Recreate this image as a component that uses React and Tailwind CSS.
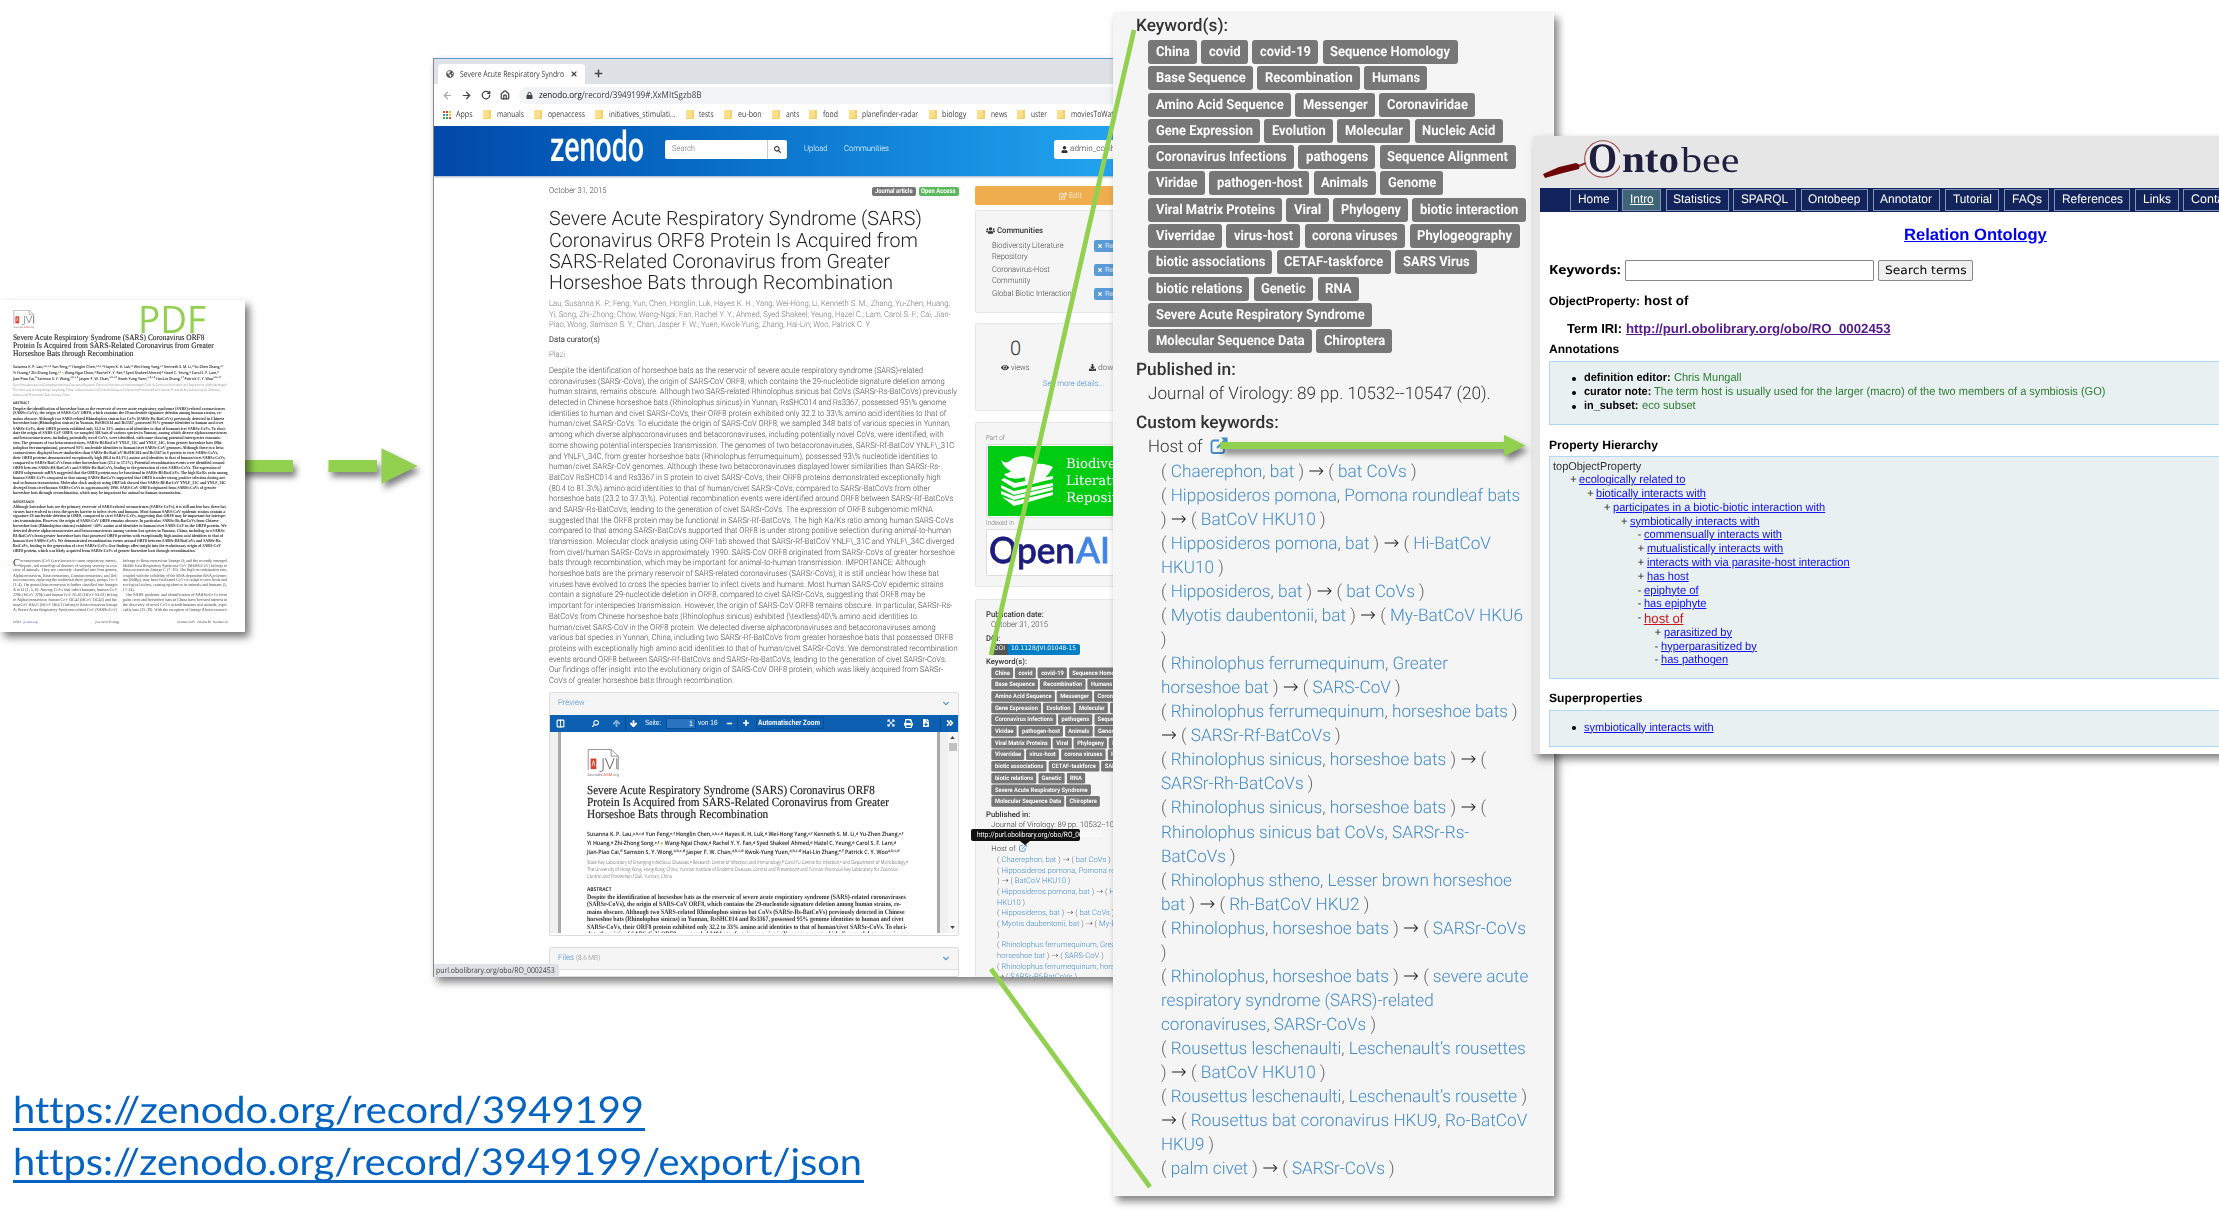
import React, { useLayoutEffect, useRef } from "react";
import {
  FaSearch, FaUser, FaUsers, FaEye, FaDownload, FaRegEdit, FaTimes, FaLock, FaGlobeAmericas,
  FaChevronDown, FaExpandArrowsAlt, FaPrint, FaFileDownload,
} from "react-icons/fa";
import { ArrowLeft, ArrowRight, RotateCw, Home, Plus, X, ChevronsRight, Columns2, ArrowUp, ArrowDown, Minus } from "lucide-react";

/* A single line of text condensed or widened to a given measure. */
function Fit({ w, className = "", children }) {
  const ref = useRef(null);
  useLayoutEffect(() => {
    const el = ref.current;
    const natural = parseFloat(getComputedStyle(el).width);
    if (natural > 0) el.style.transform = `scaleX(${w / natural})`;
  }, [w]);
  return (
    <span className={"block shrink-0 whitespace-pre " + className} style={{ width: w }}>
      <span ref={ref} className="inline-block origin-left align-top">{children}</span>
    </span>
  );
}

const Lines = ({ rows, className = "" }) => (
  <div className={className}>
    {rows.map(([t, w], i) => <Fit key={i} w={w}>{t}</Fit>)}
  </div>
);

/* ------------------------------------------------ journal article ---- */

const articleAbstract = [
  ["Despite the identification of horseshoe bats as the reservoir of severe acute respiratory syndrome (SARS)-related coronaviruses", 318.7],
  ["(SARSr-CoVs), the origin of SARS-CoV ORF8, which contains the 29-nucleotide signature deletion among human strains, re-", 314],
  ["mains obscure. Although two SARS-related Rhinolophus sinicus bat CoVs (SARSr-Rs-BatCoVs) previously detected in Chinese", 317.5],
  ["horseshoe bats (Rhinolophus sinicus) in Yunnan, RsSHC014 and Rs3367, possessed 95% genome identities to human and civet", 316.4],
  ["SARSr-CoVs, their ORF8 protein exhibited only 32.2 to 33% amino acid identities to that of human/civet SARSr-CoVs. To eluci-", 320],
  ["date the origin of SARS-CoV ORF8, we sampled 348 bats of various species in Yunnan, among which diverse alphacoronaviruses", 321.7],
  ["and betacoronaviruses, including potentially novel CoVs, were identified, with some showing potential interspecies transmis-", 313],
  ["sion. The genomes of two betacoronaviruses, SARSr-Rf-BatCoV YNLF_31C and YNLF_34C, from greater horseshoe bats (Rhi-", 315],
  ["nolophus ferrumequinum), possessed 93% nucleotide identities to human/civet SARSr-CoV genomes. Although these two beta-", 317.5],
  ["coronaviruses displayed lower similarities than SARSr-Rs-BatCoV RsSHC014 and Rs3367 in S protein to civet SARSr-CoVs,", 308.5],
  ["their ORF8 proteins demonstrated exceptionally high (80.4 to 81.3%) amino acid identities to that of human/civet SARSr-CoVs,", 319.5],
  ["compared to SARSr-BatCoVs from other horseshoe bats (23.2 to 37.3%). Potential recombination events were identified around", 318],
  ["ORF8 between SARSr-Rf-BatCoVs and SARSr-Rs-BatCoVs, leading to the generation of civet SARSr-CoVs. The expression of", 312.5],
  ["ORF8 subgenomic mRNA suggested that the ORF8 protein may be functional in SARSr-Rf-BatCoVs. The high Ka/Ks ratio among", 323],
  ["human SARS-CoVs compared to that among SARSr-BatCoVs supported that ORF8 is under strong positive selection during ani-", 320],
  ["mal-to-human transmission. Molecular clock analysis using ORF1ab showed that SARSr-Rf-BatCoV YNLF_31C and YNLF_34C", 320.5],
  ["diverged from civet/human SARSr-CoVs in approximately 1990. SARS-CoV ORF8 originated from SARSr-CoVs of greater", 305.5],
  ["horseshoe bats through recombination, which may be important for animal-to-human transmission.", 252.5],
];
const importance = [
  ["Although horseshoe bats are the primary reservoir of SARS-related coronaviruses (SARSr-CoVs), it is still unclear how these bat", 320],
  ["viruses have evolved to cross the species barrier to infect civets and humans. Most human SARS-CoV epidemic strains contain a", 319],
  ["signature 29-nucleotide deletion in ORF8, compared to civet SARSr-CoVs, suggesting that ORF8 may be important for interspe-", 320.5],
  ["cies transmission. However, the origin of SARS-CoV ORF8 remains obscure. In particular, SARSr-Rs-BatCoVs from Chinese", 309],
  ["horseshoe bats (Rhinolophus sinicus) exhibited <40% amino acid identities to human/civet SARS-CoV in the ORF8 protein. We", 321],
  ["detected diverse alphacoronaviruses and betacoronaviruses among various bat species in Yunnan, China, including two SARSr-", 319.5],
  ["Rf-BatCoVs from greater horseshoe bats that possessed ORF8 proteins with exceptionally high amino acid identities to that of", 316],
  ["human/civet SARSr-CoVs. We demonstrated recombination events around ORF8 between SARSr-Rf-BatCoVs and SARSr-Rs-", 313.5],
  ["BatCoVs, leading to the generation of civet SARSr-CoVs. Our findings offer insight into the evolutionary origin of SARS-CoV", 313],
  ["ORF8 protein, which was likely acquired from SARSr-CoVs of greater horseshoe bats through recombination.", 274.5],
];
const columnA = [
  ["oronaviruses (CoVs) are known to cause respiratory, enteric,", 146],
  ["hepatic, and neurological diseases of varying severity in a va-", 146],
  ["riety of animals. They are currently classified into four genera,", 157],
  ["Alphacoronavirus, Betacoronavirus, Gammacoronavirus, and Del-", 157],
  ["tacoronavirus, replacing the traditional three groups, groups 1 to 3", 157],
  ["(1–4). The genus Betacoronavirus is further classified into lineages", 157],
  ["A to D (1, 5, 6). Among CoVs that infect humans, human CoV", 157],
  ["229E (HCoV 229E) and human CoV NL63 (HCoV NL63) belong", 157],
  ["to Alphacoronavirus; human CoV OC43 (HCoV OC43) and hu-", 157],
  ["man CoV HKU1 (HCoV HKU1) belong to Betacoronavirus lineage", 157],
  ["A; Severe Acute Respiratory Syndrome-related CoV (SARSr-CoV)", 157],
];
const columnB = [
  ["belongs to Betacoronavirus lineage B; and the recently emerged", 157],
  ["Middle East Respiratory Syndrome CoV (MERS-CoV) belongs to", 157],
  ["Betacoronavirus lineage C (7–16). The high recombination rate,", 157],
  ["coupled with the infidelity of the RNA-dependent RNA polymer-", 157],
  ["ase (RdRp), may have facilitated CoVs to adapt to new hosts and", 157],
  ["ecological niches, causing epidemics in animals and humans (5,", 157],
  ["17–24).", 18],
  ["   The SARS epidemic and identification of SARSr-CoVs from", 157],
  ["palm civet and horseshoe bats in China have boosted interest in", 157],
  ["the discovery of novel CoVs in both humans and animals, espe-", 157],
  ["cially bats (25–29). With the exception of lineage A betacoronavi-", 157],
];

const Sup = ({ children }) => <span className="relative -top-[1.8px] text-[4px]">{children}</span>;

function Article() {
  return (
    <div className="w-[325px] font-['Liberation_Serif',serif] text-[#333]">
      <div className="w-[33px] h-[27px]">
        <svg viewBox="0 0 33 22" className="block w-[33px] h-[21px]" fill="none" stroke="#777" strokeWidth="0.8">
          <path d="M.5 22V.5h24l7.500 7V22M24.500.5v7H32" />
          <rect x="3" y="10" width="6" height="11" fill="#d4402b" stroke="none" />
          <path d="M6 12l-1.500 6M6 12l1.500 6" stroke="#fff" />
        </svg>
        <div className="-mt-[13px] ml-[14.500px] h-[14px]">
          <Fit w={18} className="font-['Open_Sans',sans-serif] font-light text-[15px] leading-[15px] text-[#555]">JVI</Fit>
        </div>
        <Fit w={32} className="mt-px font-['Liberation_Sans',sans-serif] text-[4px] leading-[5px] text-[#777]">Journals.<span className="text-[#d4402b]">ASM</span>.org</Fit>
      </div>
      <Lines className="mt-2 text-[12.4px] leading-[12.1px] text-[#222] [-webkit-text-stroke:0.15px_#222]" rows={[
        ["Severe Acute Respiratory Syndrome (SARS) Coronavirus ORF8", 287.8],
        ["Protein Is Acquired from SARS-Related Coronavirus from Greater", 302],
        ["Horseshoe Bats through Recombination", 181.3],
      ]} />
      <Lines className="mt-[11px] font-['Open_Sans',sans-serif] font-semibold text-[5.8px] leading-[6.9px] text-[#222]" rows={[
        [<>Susanna K. P. Lau,<Sup>a,b,c,d</Sup> Yun Feng,<Sup>e,f</Sup> Honglin Chen,<Sup>a,b,c,d</Sup> Hayes K. H. Luk,<Sup>d</Sup> Wei-Hong Yang,<Sup>e,f</Sup> Kenneth S. M. Li,<Sup>d</Sup> Yu-Zhen Zhang,<Sup>e,f</Sup></>, 316.4],
        [<>Yi Huang,<Sup>d</Sup> Zhi-Zhong Song,<Sup>e,f</Sup> <span className="leading-none text-[#a6ce39]">●</span> Wang-Ngai Chow,<Sup>d</Sup> Rachel Y. Y. Fan,<Sup>d</Sup> Syed Shakeel Ahmed,<Sup>d</Sup> Hazel C. Yeung,<Sup>d</Sup> Carol S. F. Lam,<Sup>d</Sup></>, 309.3],
        [<>Jian-Piao Cai,<Sup>d</Sup> Samson S. Y. Wong,<Sup>a,b,c,d</Sup> Jasper F. W. Chan,<Sup>a,b,c,d</Sup> Kwok-Yung Yuen,<Sup>a,b,c,d</Sup> Hai-Lin Zhang,<Sup>e,f</Sup> Patrick C. Y. Woo<Sup>a,b,c,d</Sup></>, 312.6],
      ]} />
      <Lines className="mt-[1.2px] font-['Open_Sans',sans-serif] font-light text-[5.2px] leading-[6.8px] text-[#444]" rows={[
        ["State Key Laboratory of Emerging Infectious Diseases,ᵃ Research Centre of Infection and Immunology,ᵇ Carol Yu Centre for Infection,ᶜ and Department of Microbiology,ᵈ", 320.9],
        ["The University of Hong Kong, Hong Kong, China; Yunnan Institute of Endemic Diseases Control and Preventionᵉ and Yunnan Provincial Key Laboratory for Zoonosis", 311],
        ["Control and Prevention,ᶠ Dali, Yunnan, China", 85],
      ]} />
      <Fit w={24.5} className="mt-[6.5px] font-['Open_Sans',sans-serif] font-bold text-[5.4px] leading-[7px]">ABSTRACT</Fit>
      <Lines className="mt-[0.8px] font-bold text-[6.8px] leading-[7.42px]" rows={articleAbstract} />
      <Fit w={31.5} className="mt-[6.6px] font-['Open_Sans',sans-serif] font-bold text-[5.4px] leading-[7px]">IMPORTANCE</Fit>
      <Lines className="font-bold text-[6.8px] leading-[7.45px]" rows={importance} />
      <div className="mt-[7px] flex gap-[8px] text-[6.6px] leading-[7.35px] text-[#444]">
        <div className="relative w-[157px]">
          <span className="absolute left-0 top-0 text-[16px] leading-[14px]">C</span>
          <Lines className="pl-[11px]" rows={columnA.slice(0, 2)} />
          <Lines rows={columnA.slice(2)} />
        </div>
        <Lines rows={columnB} />
      </div>
      <div className="mt-[12px] flex w-[323px] justify-between font-['Open_Sans',sans-serif] text-[4.6px] leading-[7px]">
        <Fit w={37}>10532   <span className="text-[#33c]">jvi.asm.org</span></Fit>
        <Fit w={36}>Journal of Virology</Fit>
        <Fit w={76}>October 2015   Volume 89   Number 20</Fit>
      </div>
    </div>
  );
}

/* ------------------------------------------- keyword metadata block ---- */

const tagRows = [
  [["China", 48.7], ["covid", 46.7], ["covid-19", 66], ["Sequence Homology", 135]],
  [["Base Sequence", 104.7], ["Recombination", 102.7], ["Humans", 63]],
  [["Amino Acid Sequence", 142.7], ["Messenger", 79.7], ["Coronaviridae", 96]],
  [["Gene Expression", 112], ["Evolution", 68.7], ["Molecular", 73], ["Nucleic Acid", 88.3]],
  [["Coronavirus Infections", 145.7], ["pathogens", 77.3], ["Sequence Alignment", 136]],
  [["Viridae", 56.7], ["pathogen-host", 100.3], ["Animals", 62], ["Genome", 63.3]],
  [["Viral Matrix Proteins", 134], ["Viral", 42.3], ["Phylogeny", 75], ["biotic interaction", 113.3]],
  [["Viverridae", 74], ["virus-host", 74], ["corona viruses", 100.7], ["Phylogeography", 110]],
  [["biotic associations", 124.3], ["CETAF-taskforce", 114.3], ["SARS Virus", 81.7]],
  [["biotic relations", 101.3], ["Genetic", 59.7], ["RNA", 41.7]],
  [["Severe Acute Respiratory Syndrome", 223.7]],
  [["Molecular Sequence Data", 163.7], ["Chiroptera", 76.3]],
];

const hostLines = [
  ["( Chaerephon, bat ) → ( bat CoVs )", 255.7],
  ["( Hipposideros pomona, Pomona roundleaf bats", 359.3],
  [") → ( BatCoV HKU10 )", 164.7],
  ["( Hipposideros pomona, bat ) → ( Hi-BatCoV", 330],
  ["HKU10 )", 62.7],
  ["( Hipposideros, bat ) → ( bat CoVs )", 263.7],
  ["( Myotis daubentonii, bat ) → ( My-BatCoV HKU6", 362],
  [")", 5.5],
  ["( Rhinolophus ferrumequinum, Greater", 287],
  ["horseshoe bat ) → ( SARS-CoV )", 239.7],
  ["( Rhinolophus ferrumequinum, horseshoe bats )", 356.7],
  ["→ ( SARSr-Rf-BatCoVs )", 179.7],
  ["( Rhinolophus sinicus, horseshoe bats ) → (", 325],
  ["SARSr-Rh-BatCoVs )", 152.3],
  ["( Rhinolophus sinicus, horseshoe bats ) → (", 325],
  ["Rhinolophus sinicus bat CoVs, SARSr-Rs-", 308.3],
  ["BatCoVs )", 74.7],
  ["( Rhinolophus stheno, Lesser brown horseshoe", 351],
  ["bat ) → ( Rh-BatCoV HKU2 )", 208.3],
  ["( Rhinolophus, horseshoe bats ) → ( SARSr-CoVs", 365],
  [")", 5.5],
  ["( Rhinolophus, horseshoe bats ) → ( severe acute", 367.3],
  ["respiratory syndrome (SARS)-related", 272.7],
  ["coronaviruses, SARSr-CoVs )", 215],
  ["( Rousettus leschenaulti, Leschenault’s rousettes", 364.7],
  [") → ( BatCoV HKU10 )", 164.7],
  ["( Rousettus leschenaulti, Leschenault’s rousette )", 366],
  ["→ ( Rousettus bat coronavirus HKU9, Ro-BatCoV", 366.3],
  ["HKU9 )", 53],
  ["( palm civet ) → ( SARSr-CoVs )", 233.7],
];

const Tokens = ({ text }) =>
  text.split(/(\(\s|\s\)|^\)|\($|→|,)/).map((p, i) =>
    p === "→" ? <span key={i} className="font-['DejaVu_Sans',sans-serif] text-[19px] leading-none text-[#222]">→</span>
      : i % 2 ? <span key={i} className="text-[#666]">{p}</span>
        : <span key={i}>{p}</span>);

function KeywordBlock() {
  return (
    <div className="w-[404px] font-['Roboto',sans-serif] text-[17.3px] leading-6 text-[#333]">
      <Fit w={92} className="font-medium text-[#333]">Keyword(s):</Fit>
      <div className="ml-3 mt-[2px] flex flex-col gap-[2.3px]">
        {tagRows.map((row, i) => (
          <div key={i} className="flex gap-[4.4px]">
            {row.map(([t, w]) => (
              <div key={t} className="h-6 shrink-0 rounded-[3px] bg-[#777] pl-[7.5px]" style={{ width: w }}>
                <Fit w={w - 15} className="text-[13.8px] font-bold leading-6 text-white">{t}</Fit>
              </div>
            ))}
          </div>
        ))}
      </div>
      <Fit w={99.7} className="mt-[5px] font-medium text-[#333]">Published in:</Fit>
      <Fit w={342.7} className="ml-3 font-light">Journal of Virology: 89 pp. 10532--10547 (20).</Fit>
      <Fit w={142.7} className="mt-[5px] font-medium text-[#333]">Custom keywords:</Fit>
      <div className="ml-3 flex">
        <Fit w={54.7} className="font-light">Host of</Fit>
        <svg viewBox="0 0 18 18" className="ml-[7px] mt-[2px] h-[18px] w-[18px]" fill="none" stroke="#428bca" strokeWidth="1.8">
          <path d="M9 3.500H3.500a2 2 0 0 0-2 2V14a2 2 0 0 0 2 2H12a2 2 0 0 0 2-2V9M7 11l8-8" />
          <path d="M11 .5h6.500V7z" fill="#428bca" stroke="none" />
        </svg>
      </div>
      <div className="ml-[24.7px] mt-[1px] font-light text-[#428bca]">
        {hostLines.map(([t, w], i) => <Fit key={i} w={w} className="h-[24.02px]"><Tokens text={t} /></Fit>)}
      </div>
    </div>
  );
}

/* -------------------------------------------------- browser window ---- */

const bookmarks = [["manuals", 27], ["openaccess", 37], ["initiatives_stimulati...", 66.5], ["tests", 14.5], ["eu-bon", 23.7], ["ants", 13.3], ["food", 15], ["planefinder-radar", 56], ["biology", 24.3], ["news", 16.3], ["uster", 16], ["moviesToWatch", 50]];
const appColors = ["bg-[#ea4335]", "bg-[#ea4335]", "bg-[#fbbc05]", "bg-[#34a853]", "bg-[#4285f4]", "bg-[#fbbc05]", "bg-[#34a853]", "bg-[#34a853]", "bg-[#ea4335]"];

const recordAbstract = [
  ["Despite the identification of horseshoe bats as the reservoir of severe acute respiratory syndrome (SARS)-related", 374],
  ["coronaviruses (SARSr-CoVs), the origin of SARS-CoV ORF8, which contains the 29-nucleotide signature deletion among", 395.8],
  ["human strains, remains obscure. Although two SARS-related Rhinolophus sinicus bat CoVs (SARSr-Rs-BatCoVs) previously", 407.8],
  ["detected in Chinese horseshoe bats (Rhinolophus sinicus) in Yunnan, RsSHC014 and Rs3367, possessed 95\\% genome", 397.3],
  ["identities to human and civet SARSr-CoVs, their ORF8 protein exhibited only 32.2 to 33\\% amino acid identities to that of", 397.3],
  ["human/civet SARSr-CoVs. To elucidate the origin of SARS-CoV ORF8, we sampled 348 bats of various species in Yunnan,", 401.4],
  ["among which diverse alphacoronaviruses and betacoronaviruses, including potentially novel CoVs, were identified, with", 394.7],
  ["some showing potential interspecies transmission. The genomes of two betacoronaviruses, SARSr-Rf-BatCoV YNLF\\_31C", 405.2],
  ["and YNLF\\_34C, from greater horseshoe bats (Rhinolophus ferrumequinum), possessed 93\\% nucleotide identities to", 388.6],
  ["human/civet SARSr-CoV genomes. Although these two betacoronaviruses displayed lower similarities than SARSr-Rs-", 391.3],
  ["BatCoV RsSHC014 and Rs3367 in S protein to civet SARSr-CoVs, their ORF8 proteins demonstrated exceptionally high", 391.6],
  ["(80.4 to 81.3\\%) amino acid identities to that of human/civet SARSr-CoVs, compared to SARSr-BatCoVs from other", 381.1],
  ["horseshoe bats (23.2 to 37.3\\%). Potential recombination events were identified around ORF8 between SARSr-Rf-BatCoVs", 404.4],
  ["and SARSr-Rs-BatCoVs, leading to the generation of civet SARSr-CoVs. The expression of ORF8 subgenomic mRNA", 383.7],
  ["suggested that the ORF8 protein may be functional in SARSr-Rf-BatCoVs. The high Ka/Ks ratio among human SARS-CoVs", 404.4],
  ["compared to that among SARSr-BatCoVs supported that ORF8 is under strong positive selection during animal-to-human", 402.2],
  ["transmission. Molecular clock analysis using ORF1ab showed that SARSr-Rf-BatCoV YNLF\\_31C and YNLF\\_34C diverged", 405.6],
  ["from civet/human SARSr-CoVs in approximately 1990. SARS-CoV ORF8 originated from SARSr-CoVs of greater horseshoe", 405.6],
  ["bats through recombination, which may be important for animal-to-human transmission. IMPORTANCE: Although", 376.6],
  ["horseshoe bats are the primary reservoir of SARS-related coronaviruses (SARSr-CoVs), it is still unclear how these bat", 390.1],
  ["viruses have evolved to cross the species barrier to infect civets and humans. Most human SARS-CoV epidemic strains", 394.7],
  ["contain a signature 29-nucleotide deletion in ORF8, compared to civet SARSr-CoVs, suggesting that ORF8 may be", 376.2],
  ["important for interspecies transmission. However, the origin of SARS-CoV ORF8 remains obscure. In particular, SARSr-Rs-", 403.3],
  ["BatCoVs from Chinese horseshoe bats (Rhinolophus sinicus) exhibited {\\textless}40\\% amino acid identities to", 368],
  ["human/civet SARS-CoV in the ORF8 protein. We detected diverse alphacoronaviruses and betacoronaviruses among", 386.8],
  ["various bat species in Yunnan, China, including two SARSr-Rf-BatCoVs from greater horseshoe bats that possessed ORF8", 404],
  ["proteins with exceptionally high amino acid identities to that of human/civet SARSr-CoVs. We demonstrated recombination", 408.6],
  ["events around ORF8 between SARSr-Rf-BatCoVs and SARSr-Rs-BatCoVs, leading to the generation of civet SARSr-CoVs.", 397.7],
  ["Our findings offer insight into the evolutionary origin of SARS-CoV ORF8 protein, which was likely acquired from SARSr-", 394.3],
  ["CoVs of greater horseshoe bats through recombination.", 184.7],
];

function BrowserChrome() {
  return (
    <div className="font-['Open_Sans',sans-serif] text-[8.6px] text-[#444]">
      <div className="flex h-[26px] items-end bg-[#dee1e6] pl-[4px] shadow-[inset_0_1px_0_#5b9bd5]">
        <div className="flex h-5 w-[147px] items-center rounded-t-[4px] bg-white pl-2">
          <FaGlobeAmericas className="h-[8px] w-[8px] text-[#555]" />
          <Fit w={104} className="ml-[6px]">Severe Acute Respiratory Syndro</Fit>
          <X className="ml-[6px] h-[8px] w-[8px]" strokeWidth={3.5} />
        </div>
        <Plus className="mb-[5px] ml-2 h-[11px] w-[11px]" strokeWidth={3.2} />
      </div>
      <div className="flex h-[22px] items-center bg-white pl-[8px]">
        <ArrowLeft className="h-[11px] w-[11px] text-[#aaa]" strokeWidth={2.6} />
        <ArrowRight className="ml-[8px] h-[11px] w-[11px]" strokeWidth={2.6} />
        <RotateCw className="ml-[9px] h-[10px] w-[10px]" strokeWidth={3} />
        <Home className="ml-[9px] h-[10px] w-[10px]" strokeWidth={3} />
        <div className="ml-[9px] flex h-[17px] grow items-center rounded-l-full bg-[#f1f3f4] pl-[7px]">
          <FaLock className="h-[7px] w-[7px]" />
          <Fit w={162.6} className="ml-[6px] text-[9.3px]"><span className="text-[#111]">zenodo.org</span>/record/3949199#.XxMItSgzb8B</Fit>
        </div>
      </div>
      <div className="flex h-5 items-center bg-white pb-[3px] pl-[9px]">
        <div className="grid h-[8px] w-[8px] shrink-0 grid-cols-3 gap-[1px]">
          {appColors.map((c, i) => <span key={i} className={c} />)}
        </div>
        <Fit w={16.6} className="ml-[5px]">Apps</Fit>
        {bookmarks.map(([t, w]) => (
          <React.Fragment key={t}>
            <span className="ml-[10.4px] h-[9px] w-[8px] shrink-0 rounded-[1px] bg-[#fbdf8a] shadow-[inset_-2px_-1px_0_#f7d06a]" />
            <Fit w={w} className="ml-[5.7px]">{t}</Fit>
          </React.Fragment>
        ))}
      </div>
    </div>
  );
}

function SiteHeader() {
  return (
    <div className="flex h-[49.5px] shrink-0 items-center bg-gradient-to-r from-[#0348a9] to-[#22a4f0] pb-[3px] pl-[115.5px] text-[8.2px] font-light text-white shadow-[0_1px_2px_#9ab]">
      <Fit w={94} className="-mt-[3px] h-[42px] text-[42px] font-medium leading-[42px]">zenodo</Fit>
      <div className="ml-[21px] flex h-[19px] w-[102.5px] shrink-0 items-center rounded-l-[2px] bg-white pl-[7px] text-[#777]"><Fit w={23}>Search</Fit></div>
      <div className="flex h-[19px] w-5 shrink-0 items-center justify-center rounded-r-[2px] border-l border-[#ccc] bg-white"><FaSearch className="h-[7px] w-[7px] text-[#333]" /></div>
      <Fit w={23.4} className="ml-[17px]">Upload</Fit>
      <Fit w={45} className="ml-[16.3px]">Communities</Fit>
      <div className="ml-[165px] flex h-[19px] w-[70px] shrink-0 items-center rounded-[2px] bg-white pl-[7px] text-[#333]">
        <FaUser className="h-[7px] w-[7px] shrink-0" />
        <Fit w={50} className="ml-[2px]">admin_coviho</Fit>
      </div>
    </div>
  );
}

function PdfPreview() {
  return (
    <div className="mt-[5px] h-[244px] rounded-[2px] border border-[#ddd] bg-white">
      <div className="flex h-[22px] items-center justify-between bg-[#f5f5f5] px-[8px] pb-px text-[#428bca]">
        <Fit w={26.6}>Preview</Fit><FaChevronDown className="h-[7px] w-[8px]" />
      </div>
      <div className="flex h-[17.5px] items-center bg-[#0d5fb1] pl-[6px] font-['Liberation_Sans',sans-serif] font-normal text-[7.5px] text-white">
        <Columns2 className="h-[9px] w-[9px]" strokeWidth={3} />
        <FaSearch className="ml-[27px] h-[7px] w-[7px] -scale-x-100" />
        <ArrowUp className="ml-[13px] h-[9px] w-[9px] opacity-50" strokeWidth={5} />
        <span className="ml-[4px] h-[13px] w-px bg-[#0a4a8c]" />
        <ArrowDown className="ml-[3px] h-[9px] w-[9px]" strokeWidth={5} />
        <Fit w={16} className="ml-[7px]">Seite:</Fit>
        <div className="ml-[5px] h-[11px] w-[30px] border border-[#0a4f96] bg-[#2a73c0] pr-[2px] text-right leading-[10px]">1</div>
        <Fit w={19.5} className="ml-[2px]">von 16</Fit>
        <Minus className="ml-[8px] h-[7px] w-[7px]" strokeWidth={5} />
        <span className="ml-[4px] h-[13px] w-px bg-[#0a4a8c]" />
        <Plus className="ml-[4px] h-[8px] w-[8px]" strokeWidth={5} />
        <div className="ml-[6px] flex h-[12px] w-[68px] items-center border border-[#0a4f96] pl-px"><Fit w={62} className="font-semibold">Automatischer Zoom</Fit></div>
        <FaExpandArrowsAlt className="ml-[63px] h-[8px] w-[8px]" />
        <FaPrint className="ml-[9px] h-[9px] w-[9px]" />
        <FaFileDownload className="ml-[9px] h-[8px] w-[8px]" />
        <span className="ml-[10px] h-[13px] w-px bg-[#0a4a8c]" />
        <ChevronsRight className="ml-[4px] h-[10px] w-[10px]" strokeWidth={4} />
      </div>
      <div className="flex h-[201px] bg-[#f0f0f0]">
        <div className="ml-[8px] h-full w-[3px] bg-[#aaa]" />
        <div className="h-full w-[376px] overflow-hidden bg-white pl-[25.5px] pt-[17px]"><Article /></div>
        <div className="h-full w-[3px] bg-[#aaa]" />
        <div className="ml-auto flex w-[10px] flex-col items-center bg-[#f7f7f7] py-[4px]">
          <svg viewBox="0 0 6 4" className="h-[3px] w-[5px]"><path d="M0 4L3 0l3 4z" fill="#444" /></svg>
          <div className="mt-[4px] h-[8px] w-[8px] bg-[#c1c1c1]" />
          <svg viewBox="0 0 6 4" className="mt-auto h-[3px] w-[5px]"><path d="M0 0l3 4 3-4z" fill="#444" /></svg>
        </div>
      </div>
    </div>
  );
}

function RecordMain() {
  return (
    <div className="w-[409.5px] shrink-0 text-[8.2px] font-light leading-[10.68px] text-[#444]">
      <div className="mt-[10px] flex h-[12px] items-center">
        <Fit w={57.5}>October 31, 2015</Fit>
        <div className="ml-auto flex h-[9.5px] w-[44px] justify-center rounded-[2px] bg-[#777] text-white"><Fit w={37.5} className="text-[6.6px] font-bold leading-[9.5px]">Journal article</Fit></div>
        <div className="ml-[2.5px] flex h-[9.5px] w-[40px] justify-center rounded-[2px] bg-[#5cb85c] text-white"><Fit w={34.5} className="text-[6.6px] font-bold leading-[9.5px]">Open Access</Fit></div>
      </div>
      <Lines className="mt-[10.7px] text-[19.8px] leading-[21.4px] text-[#222]" rows={[
        ["Severe Acute Respiratory Syndrome (SARS)", 372.8],
        ["Coronavirus ORF8 Protein Is Acquired from", 368.8],
        ["SARS-Related Coronavirus from Greater", 341],
        ["Horseshoe Bats through Recombination", 344],
      ]} />
      <Lines className="mt-[5px] text-[#777]" rows={[
        ["Lau, Susanna K. P.; Feng, Yun; Chen, Honglin; Luk, Hayes K. H.; Yang, Wei-Hong; Li, Kenneth S. M.; Zhang, Yu-Zhen; Huang,", 401],
        ["Yi; Song, Zhi-Zhong; Chow, Wang-Ngai; Fan, Rachel Y. Y.; Ahmed, Syed Shakeel; Yeung, Hazel C.; Lam, Carol S. F.; Cai, Jian-", 401.8],
        ["Piao; Wong, Samson S. Y.; Chan, Jasper F. W.; Yuen, Kwok-Yung; Zhang, Hai-Lin; Woo, Patrick C. Y.", 322.2],
      ]} />
      <Fit w={51} className="mt-[4.2px] font-normal text-[#333]">Data curator(s)</Fit>
      <Fit w={16} className="mt-[4.3px] text-[#777]">Plazi</Fit>
      <Lines className="mt-[5.3px]" rows={recordAbstract} />
      <PdfPreview />
      <div className="mt-[11px] h-[30px] rounded-[2px] border border-[#ddd]">
        <div className="flex h-[22.5px] items-center border-b border-[#ddd] bg-[#f5f5f5] px-[8px] text-[#428bca]">
          <Fit w={16}>Files</Fit><Fit w={24} className="ml-[2px] text-[7px] text-[#888]">(8.6 MB)</Fit>
          <FaChevronDown className="ml-auto h-[7px] w-[8px]" />
        </div>
      </div>
    </div>
  );
}

const RemoveButton = () => (
  <div className="ml-auto flex h-[12px] w-[40px] items-center gap-[2px] rounded-[2px] bg-[#5b9bd8] pl-[3px] text-[7px] text-white"><FaTimes className="h-[6px] w-[6px]" />Remove</div>
);

function RecordSidebar() {
  const panel = "rounded-[2px] border border-[#e6e6e6] bg-[#f5f5f5]";
  return (
    <div className="ml-[16.5px] w-[163px] shrink-0 text-[8.1px] font-light leading-[10.7px] text-[#444]">
      <div className="mt-[10.7px] flex h-[18.7px] items-center justify-center gap-[2px] rounded-[2px] bg-[#f0ad4e] pl-[27px] text-white">
        <FaRegEdit className="h-[8px] w-[8px]" /><Fit w={12.8}>Edit</Fit>
      </div>
      <div className={panel + " mt-[5.3px] h-[102.7px] pl-[10px] pt-[14px]"}>
        <div className="flex items-center text-[#333]"><FaUsers className="h-[9px] w-[9px]" /><Fit w={46} className="ml-[2px] font-medium">Communities</Fit></div>
        <div className="mt-[4.2px] flex w-[148px] flex-col gap-[2.5px] pl-[6px]">
          <div className="flex items-start"><Lines rows={[["Biodiversity Literature", 71.7], ["Repository", 35.7]]} /><RemoveButton /></div>
          <div className="flex items-start"><Lines rows={[["Coronavirus-Host", 58], ["Community", 38.3]]} /><RemoveButton /></div>
          <div className="flex items-start"><Fit w={83.6}>Global Biotic Interactions</Fit><RemoveButton /></div>
        </div>
      </div>
      <div className={panel + " mt-[10.6px] h-[87.4px] pt-[13px]"}>
        <div className="flex">
          <div className="flex w-[92px] flex-col items-center">
            <div className="text-[20px] leading-[22px] text-[#333]">0</div>
            <div className="mt-[2.5px] flex items-center gap-[2px]"><FaEye className="h-[7px] w-[8px] text-[#333]" /><Fit w={18.5}>views</Fit></div>
          </div>
          <div className="ml-[34px] mt-[24.5px] flex items-center gap-[2px]"><FaDownload className="h-[7px] w-[7px] text-[#333]" /><span>downloads</span></div>
        </div>
        <Fit w={61} className="ml-[66.5px] mt-[5.5px] text-[#428bca]">See more details...</Fit>
      </div>
      <div className={panel + " mt-[11px] h-[165.3px] pl-[10px] pt-[10px]"}>
        <Fit w={18.8} className="text-[7px] text-[#777]">Part of</Fit>
        <div className="h-[74px] rounded-[2px] border border-[#ddd] bg-white p-px">
          <div className="flex h-[70px] items-center bg-[#00cc11]">
            <svg viewBox="0 0 54 50" className="ml-[12px] h-[50px] w-[54px] shrink-0" fill="#fff">
              <path d="M1 4c3 3 6 3 9 1C14 0 24-1 32 2l4 6c7-1 12 1 17 3-5 8-10 16-21 17-5 0-8-3-7-7-9 3-18 2-21-3 3-1 5-1 7-3C7 13 3 10 1 4z" />
              <path d="M4 22l-3 2 13 8 39-9v-3l-38 7zM1 29v3l13 7 39-9v-3l-39 8zM1 35v3l13 6 39-10v-3l-39 9zM2 41l12 9 39-11v-3l-38 9z" />
            </svg>
            <div className="ml-[12px] mt-px font-['DejaVu_Serif',serif] text-[13.5px] font-normal leading-[17px] text-white">
              <Fit w={80}>Biodiversity</Fit><Fit w={68}>Literature</Fit><Fit w={73}>Repository</Fit>
            </div>
          </div>
        </div>
        <Fit w={28} className="mt-[0.5px] text-[7px] text-[#777]">Indexed in</Fit>
        <div className="flex h-[47px] rounded-[2px] border border-[#ddd] bg-white pl-[2px] font-['Lato',sans-serif] text-[36px] font-medium leading-[39px] [-webkit-text-stroke:0.8px_currentColor]">
          <Fit w={86} className="text-[#1c1c7c]">Open</Fit><Fit w={34} className="ml-[1px] text-[#4285e4]">AI</Fit><Fit w={40} className="ml-[3px] text-[#4285e4]">RE</Fit>
        </div>
      </div>
      <div className={panel + " mt-[12px] h-[400px] pl-[10px] pt-[8.5px]"}>
        <Fit w={57.7} className="font-medium text-[#333]">Publication date:</Fit>
        <Fit w={57} className="ml-[5px]">October 31, 2015</Fit>
        <Fit w={14.3} className="mt-[2.5px] font-medium text-[#333]">DOI:</Fit>
        <div className="ml-[5px] mt-px flex h-[10.7px] w-[89px] overflow-hidden rounded-[2px] bg-[#007ec6] font-['DejaVu_Sans',sans-serif] text-[6.3px] font-normal leading-[10.7px] text-white">
          <div className="w-[16.5px] bg-[#555] pl-[3px]"><Fit w={11}>DOI</Fit></div><Fit w={65} className="ml-[3.3px]">10.1128/JVI.01048-15</Fit>
        </div>
        <div className="mt-[1.5px] h-0 w-[404px] origin-top-left scale-[0.4446]"><KeywordBlock /></div>
      </div>
    </div>
  );
}

function ZenodoWindow() {
  return (
    <div className="absolute left-[433px] top-[58px] h-[919px] w-[683px] shadow-[4px_5px_8px_rgba(0,0,0,0.5)]">
      <div className="flex h-full flex-col overflow-hidden border-l border-[#888] bg-white font-['Roboto',sans-serif]">
        <BrowserChrome />
        <SiteHeader />
        <div className="flex min-h-0 pl-[115px]"><RecordMain /><RecordSidebar /></div>
      </div>
      <div className="absolute bottom-0 left-[1px] flex h-[13px] w-[125px] items-center rounded-tr-[2px] bg-[#dee1e6] pl-[2px] font-['Open_Sans',sans-serif] text-[8px] text-[#444]"><Fit w={118.6}>purl.obolibrary.org/obo/RO_0002453</Fit></div>
      <div className="absolute left-[538px] top-[771px] h-[12px] w-[109px] rounded-[2px] bg-[#111] pl-[5.5px] font-['Roboto',sans-serif] text-[7.4px] leading-[12px] text-white">
        <Fit w={124}>http://purl.obolibrary.org/obo/RO_0002453</Fit>
        <svg viewBox="0 0 10 4" className="absolute left-[49px] top-[12px] h-[4px] w-[10px]"><path d="M0 0h10L5 4z" fill="#111" /></svg>
      </div>
    </div>
  );
}

/* ------------------------------------------------- ontology browser ---- */

const nav = [["Home", 48, 31.6], ["Intro", 39, 23.7], ["Statistics", 63.5, 48], ["SPARQL", 63, 47], ["Ontobeep", 67.6, 52.3], ["Annotator", 67.8, 52], ["Tutorial", 54.7, 39], ["FAQs", 45.8, 30], ["References", 76.6, 61], ["Links", 44, 28], ["Contact", 60, 43]];

const tree = [
  [0, "+", "ecologically related to", 106.3],
  [1, "+", "biotically interacts with", 109.9],
  [2, "+", "participates in a biotic-biotic interaction with", 212.2],
  [3, "+", "symbiotically interacts with", 129.6],
  [4, "-", "commensually interacts with", 138],
  [4, "+", "mutualistically interacts with", 136.2],
  [4, "+", "interacts with via parasite-host interaction", 202.6],
  [4, "+", "has host", 41.7],
  [4, "-", "epiphyte of", 54.5],
  [4, "-", "has epiphyte", 62.4],
  [4, "-", "host of", 39.5, true],
  [5, "+", "parasitized by", 68],
  [5, "-", "hyperparasitized by", 95.8],
  [5, "-", "has pathogen", 67.2],
];

const Note = ({ label, lw, text, tw }) => (
  <li className="flex items-center"><span className="mr-[8px] h-[4px] w-[4px] rounded-full bg-black" />
    <Fit w={lw} className="font-bold text-black">{label}</Fit>{text && <Fit w={tw} className="ml-[3.5px] text-[#2e7d32]">{text}</Fit>}</li>
);

function OntobeeWindow() {
  const box = "border-y-[1.5px] border-l-[1.5px] border-[#b0d8f5] bg-[#e9f0f2]";
  return (
    <div className="absolute left-[1533px] top-[136px] h-[618px] w-[700px] bg-white font-['Liberation_Sans',sans-serif] text-[12px] text-black shadow-[4px_5px_8px_rgba(0,0,0,0.5)]">
      <div className="flex h-full flex-col border-l-[7px] border-[#e6e6e6]">
        <div className="flex h-[52px] items-start bg-[#e6e6e6] font-['Liberation_Serif',serif] text-[#1f1f3f]">
          <div className="relative h-[46px] w-[80px]">
            <svg viewBox="0 0 80 46" className="absolute left-0 top-0 h-[46px] w-[80px]">
              <circle cx="63" cy="23" r="18.3" fill="#ececec" stroke="#a04848" strokeWidth="1.1" />
              <path d="M3 38l16-7 17-4 4 2-1 4-16 4-18 5z" fill="#6d0505" />
              <path d="M39 30l7-3" stroke="#8a3030" strokeWidth="2" />
            </svg>
            <Fit w={29} className="ml-[47.7px] mt-[1.5px] text-[42px] font-bold leading-[43px]">O</Fit>
          </div>
          <Fit w={57} className="ml-[2px] text-[38px] font-bold leading-[48px]">nto</Fit>
          <Fit w={58.5} className="ml-[2px] text-[36px] leading-[49px]">bee</Fit>
        </div>
        <div className="flex h-[23.5px] items-center gap-[4.3px] overflow-hidden bg-[#12245b] pl-[30px] text-[12.4px] text-white">
          {nav.map(([t, w, tw]) => (
            <div key={t} className={"flex h-[22px] shrink-0 items-center justify-center border border-[#8294b5] " + (t === "Intro" ? "bg-[#3f6478] [&>span>span]:underline" : "")} style={{ width: w }}><Fit w={tw}>{t}</Fit></div>
          ))}
        </div>
        <Fit w={142.8} className="ml-[364px] mt-[13.5px] text-[16.5px] font-bold leading-[20px] text-[#0000ee] [&>span]:underline">Relation Ontology</Fit>
        <div className="mt-[15px] flex h-[20.5px] items-center pl-[8.5px] font-['Open_Sans',sans-serif]">
          <Fit w={71.6} className="text-[12.5px] font-bold">Keywords:</Fit>
          <div className="ml-[5px] h-[20.5px] w-[248.5px] rounded-[1px] border border-[#888] bg-white" />
          <div className="ml-[4.3px] flex h-[20.5px] w-[95.5px] items-center justify-center rounded-[2px] border border-[#888] bg-[#efefef] font-['DejaVu_Sans',sans-serif] text-[11.5px]"><Fit w={81.7}>Search terms</Fit></div>
        </div>
        <div className="pl-[8.5px]">
          <div className="mt-[12px] flex items-center text-[12px] font-bold leading-4"><Fit w={91}>ObjectProperty:</Fit><Fit w={44.4} className="ml-[4.7px] text-[13px]">host of</Fit></div>
          <div className="ml-[18px] mt-[12.5px] flex text-[13.2px] font-bold leading-4"><Fit w={55}>Term IRI:</Fit><Fit w={264.5} className="ml-[4.7px] text-[#551a8b] [&>span]:underline">http://purl.obolibrary.org/obo/RO_0002453</Fit></div>
          <Fit w={70.3} className="mt-[4px] text-[12px] font-bold leading-4">Annotations</Fit>
          <ul className={box + " mt-[3.5px] h-[64px] pl-[22px] pt-[10.5px] text-[11.5px] leading-[13.9px]"}>
            <Note label="definition editor:" lw={86.6} text="Chris Mungall" tw={67.5} />
            <Note label="curator note:" lw={67.3} text="The term host is usually used for the larger (macro) of the two members of a symbiosis (GO)" tw={451.5} />
            <Note label="in_subset:" lw={54.5} text="eco subset" tw={53.7} />
          </ul>
          <Fit w={109} className="mt-[12px] text-[12px] font-bold leading-4">Property Hierarchy</Fit>
          <div className={box + " mt-[3px] h-[223px] pl-[3px] pt-[4px] text-[11.5px] leading-[13.8px] text-[#333]"}>
            <Fit w={88.3}>topObjectProperty</Fit>
            {tree.map(([d, sign, t, w, hot]) => (
              <div key={t} className="flex" style={{ paddingLeft: 17.5 + d * 16.9 }}>
                <span className={sign === "+" ? "w-[9px]" : "w-[6.6px]"}>{sign}</span>
                <Fit w={w} className={hot ? "text-[13.5px] leading-[14.5px] text-[#c8191e] [&>span]:underline" : "text-[#1111e8] [&>span]:underline"}>{t}</Fit>
              </div>
            ))}
          </div>
          <Fit w={93.6} className="mt-[11.5px] text-[12px] font-bold leading-4">Superproperties</Fit>
          <div className={box + " mt-[4px] flex h-[36.5px] items-center pl-[22px] text-[11.5px]"}>
            <span className="mr-[8px] h-[4px] w-[4px] rounded-full bg-black" /><Fit w={129.6} className="text-[#1111e8] [&>span]:underline">symbiotically interacts with</Fit>
          </div>
        </div>
      </div>
    </div>
  );
}

/* ------------------------------------------------------------ slide ---- */

export default function App() {
  return (
    <div className="relative h-[1210px] w-[2219px] overflow-hidden bg-white [text-rendering:geometricPrecision]">
      <svg viewBox="0 0 2219 1210" className="absolute left-0 top-0 h-[1210px] w-[2219px]" fill="#92d050">
        <g className="drop-shadow-[3px_5px_3px_rgba(0,0,0,0.5)]">
          <path d="M240 460h53v12h-53zM328.500 460h48.500v12h-48.500zM381.500 448.200v35.600L417.500 466z" />
        </g>
      </svg>

      <div className="absolute left-0 top-[300px] h-[332px] w-[244.5px] bg-white shadow-[4px_5px_8px_rgba(0,0,0,0.55)]">
        <div className="h-0 w-[325px] origin-top-left translate-x-[13px] translate-y-[10px] scale-[0.665]"><Article /></div>
        <div className="absolute left-[138px] top-[-2px]"><Fit w={68} className="font-['Open_Sans',sans-serif] text-[38px] leading-[42px] text-[#92d050]">PDF</Fit></div>
      </div>

      <ZenodoWindow />

      <div className="absolute left-[1113px] top-[13px] h-[1183px] w-[441px] border-r border-white bg-[#f5f5f5] pl-[23px] pt-[1px] shadow-[4px_5px_8px_rgba(0,0,0,0.5)]"><KeywordBlock /></div>

      <OntobeeWindow />

      <svg viewBox="0 0 2219 1210" className="pointer-events-none absolute left-0 top-0 h-[1210px] w-[2219px]" fill="none" stroke="#92d050" strokeWidth="4.8">
        <path d="M991 655L1134 30M991 969L1150 1187" />
        <g className="drop-shadow-[3px_5px_3px_rgba(0,0,0,0.5)]" fill="#92d050" stroke="none">
          <path d="M1220 442h284v-7.300L1525.500 445.500 1504 456.300V449h-284z" />
        </g>
      </svg>

      <div className="absolute left-[13px] top-[1083px] font-['Lato',sans-serif] text-[37px] text-[#0563c1] [font-variant-ligatures:none]">
        <a className="block h-[48px] w-[632px] border-b-[3px] border-[#0563c1]"><Fit w={631} className="leading-[51px]">https://zenodo.org/record/3949199</Fit></a>
        <a className="mt-[4px] block h-[48px] w-[850.5px] border-b-[3px] border-[#0563c1]"><Fit w={849} className="leading-[51px]">https://zenodo.org/record/3949199/export/json</Fit></a>
      </div>
    </div>
  );
}
